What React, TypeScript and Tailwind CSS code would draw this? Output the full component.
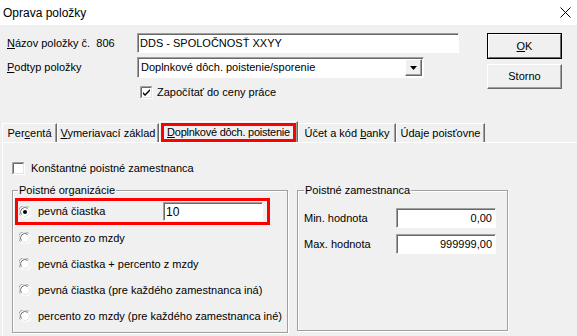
import React from 'react';

const Sunken = ({ className = '', children }: { className?: string; children?: React.ReactNode }) => (
  <div
    className={`bg-white border border-t-[#a0a0a0] border-l-[#a0a0a0] border-b-white border-r-white shadow-[inset_1px_1px_0_#696969] flex items-center ${className}`}
  >
    {children}
  </div>
);

const CheckBox = ({ checked }: { checked?: boolean }) => (
  <svg width="13" height="13" viewBox="0 0 13 13" className="shrink-0">
    <rect x="0" y="0" width="13" height="13" fill="#fff" />
    <path d="M0.5 12.5V0.5H12.5" stroke="#a0a0a0" fill="none" />
    <path d="M1.5 11.5V1.5H11.5" stroke="#696969" fill="none" />
    <path d="M0.5 12.5H12.5V0.5" stroke="#fff" fill="none" />
    <path d="M1.5 11.5H11.5V1.5" stroke="#e3e3e3" fill="none" />
    {checked && <path d="M3 6l2 2 5-5v2l-5 5-2-2z" fill="#000" />}
  </svg>
);

const Radio = ({ checked }: { checked?: boolean }) => (
  <svg width="12" height="12" viewBox="0 0 12 12" className="shrink-0">
    <circle cx="6" cy="6" r="5.5" fill="#fff" />
    <path d="M1.3 9.5A5.5 5.5 0 0 1 9.5 1.3" stroke="#a0a0a0" fill="none" />
    <path d="M2.4 8.7A4.5 4.5 0 0 1 8.7 2.4" stroke="#696969" fill="none" />
    <path d="M10.7 2.5A5.5 5.5 0 0 1 2.5 10.7" stroke="#fff" fill="none" />
    <path d="M9.6 3.3A4.5 4.5 0 0 1 3.3 9.6" stroke="#e3e3e3" fill="none" />
    {checked && <circle cx="6" cy="6" r="2" fill="#000" />}
  </svg>
);

const Tab = ({ w, children, active }: { w: string; children: React.ReactNode; active?: boolean }) => (
  <div
    className={`${w} flex items-center justify-center border-t border-l border-t-white border-l-white border-r border-r-[#696969] shadow-[inset_-1px_0_0_#a0a0a0] ${
      active ? 'h-[21px] bg-[#f0f0f0] -mb-px z-10' : 'h-[19px] mt-[2px]'
    }`}
  >
    {active ? (
      <div className="w-[135px] h-[19px] border-[3px] border-[#ff0000] flex items-center justify-center tracking-[-0.25px]">
        {children}
      </div>
    ) : (
      children
    )}
  </div>
);

const Radios = [
  'percento zo mzdy',
  'pevná čiastka + percento z mzdy',
  'pevná čiastka (pre každého zamestnanca iná)',
  'percento zo mzdy (pre každého zamestnanca iné)',
];

export default function App() {
  return (
    <div className="w-[577px] h-[336px] bg-white flex flex-col overflow-hidden whitespace-nowrap text-[11px] text-black font-['Liberation_Sans',Arial,sans-serif]">
      {/* title bar */}
      <div className="h-[25px] shrink-0 flex items-center justify-between pl-[3px] pr-[6px]">
        <span className="text-[12px]">Oprava položky</span>
        <svg width="11" height="11" viewBox="0 0 11 11">
          <path d="M0.5 0.5L10.5 10.5M10.5 0.5L0.5 10.5" stroke="#000" strokeWidth="1" />
        </svg>
      </div>

      <div className="flex-1 bg-[#f0f0f0] flex flex-col">
        {/* header area */}
        <div className="flex pt-[8px]">
          <div className="pl-[7px] flex flex-col">
            <div className="flex items-center h-[20px]">
              <span className="w-[130px]">
                <u>N</u>ázov položky č.&nbsp; 806
              </span>
              <Sunken className="w-[322px] h-[20px] pl-[2px]">DDS - SPOLOČNOSŤ XXYY</Sunken>
            </div>
            <div className="flex items-center h-[21px] mt-[4px]">
              <span className="w-[130px]">
                <u>P</u>odtyp položky
              </span>
              <Sunken className="w-[287px] h-[21px] pl-[3px] pr-[1px] justify-between">
                <span>Doplnkové dôch. poistenie/sporenie</span>
                <div className="w-[17px] h-[17px] bg-[#f0f0f0] border border-t-white border-l-white border-b-[#696969] border-r-[#696969] shadow-[inset_-1px_-1px_0_#a0a0a0] flex items-center justify-center">
                  <svg width="7" height="4" viewBox="0 0 7 4">
                    <path d="M0 0H7L3.5 4z" fill="#000" />
                  </svg>
                </div>
              </Sunken>
            </div>
            <div className="flex items-center h-[13px] mt-[8px] pl-[133px] gap-[4px]">
              <CheckBox checked />
              <span>Započítať do ceny práce</span>
            </div>
          </div>
          <div className="ml-[28px] flex flex-col">
            <div className="w-[75px] h-[26px] border border-black flex">
              <div className="flex-1 border border-t-white border-l-white border-b-[#696969] border-r-[#696969] flex items-center justify-center">
                <span>
                  <u>O</u>K
                </span>
              </div>
            </div>
            <div className="w-[75px] h-[25px] mt-[5px] border border-t-white border-l-white border-b-[#696969] border-r-[#696969] shadow-[inset_-1px_-1px_0_#a0a0a0] flex items-center justify-center">
              Storno
            </div>
          </div>
        </div>

        {/* tabs */}
        <div className="flex items-start mt-[22px] pl-[2px]">
          <Tab w="w-[55px]">
            <span>
              Per<u>c</u>entá
            </span>
          </Tab>
          <Tab w="w-[102px]">
            <span>
              <u>V</u>ymeriavací základ
            </span>
          </Tab>
          <Tab w="w-[139px]" active>
            <span>
              <u>D</u>oplnkové dôch. poistenie
            </span>
          </Tab>
          <Tab w="w-[98px]">
            <span>
              Účet a kód <u>b</u>anky
            </span>
          </Tab>
          <Tab w="w-[89px]">
            <span>Údaje poisťovne</span>
          </Tab>
        </div>

        {/* tab panel */}
        <div className="flex-1 ml-[2px] border-t border-l border-white flex flex-col pl-[9px]">
          <div className="flex items-center gap-[6px] mt-[19px] h-[12px]">
            <CheckBox />
            <span>Konštantné poistné zamestnanca</span>
          </div>

          <div className="flex mt-[16px] gap-[9px]">
            {/* left group */}
            <div className="relative w-[276px] h-[143px] border border-[#a0a0a0] shadow-[1px_1px_0_#fff,inset_1px_1px_0_#fff] flex flex-col">
              <span className="absolute -top-[7px] left-[5px] px-[1px] bg-[#f0f0f0] leading-[13px]">Poistné organizácie</span>
              <div className="mt-[7px] ml-[2px] w-[255px] h-[27px] border-[3px] border-[#ff0000] flex items-center pl-[1px]">
                <Radio checked />
                <span className="ml-[7px] w-[125px]">pevná čiastka</span>
                <Sunken className="w-[100px] h-[19px] pl-[2px] text-[12px]">10</Sunken>
              </div>
              {Radios.map((r) => (
                <div key={r} className="h-[26px] flex items-center pl-[6px]">
                  <Radio />
                  <span className="ml-[7px]">{r}</span>
                </div>
              ))}
            </div>

            {/* right group */}
            <div className="relative w-[211px] h-[141px] border border-[#a0a0a0] shadow-[1px_1px_0_#fff,inset_1px_1px_0_#fff] flex flex-col pl-[6px]">
              <span className="absolute -top-[7px] left-[6px] px-[1px] bg-[#f0f0f0] leading-[13px]">Poistné zamestnanca</span>
              <div className="flex items-center mt-[17px] h-[20px]">
                <span className="w-[92px]">Min. hodnota</span>
                <Sunken className="w-[100px] h-[20px] justify-end pr-[3px]">0,00</Sunken>
              </div>
              <div className="flex items-center mt-[6px] h-[20px]">
                <span className="w-[92px]">Max. hodnota</span>
                <Sunken className="w-[100px] h-[20px] justify-end pr-[3px]">999999,00</Sunken>
              </div>
            </div>
          </div>
        </div>
      </div>
    </div>
  );
}
